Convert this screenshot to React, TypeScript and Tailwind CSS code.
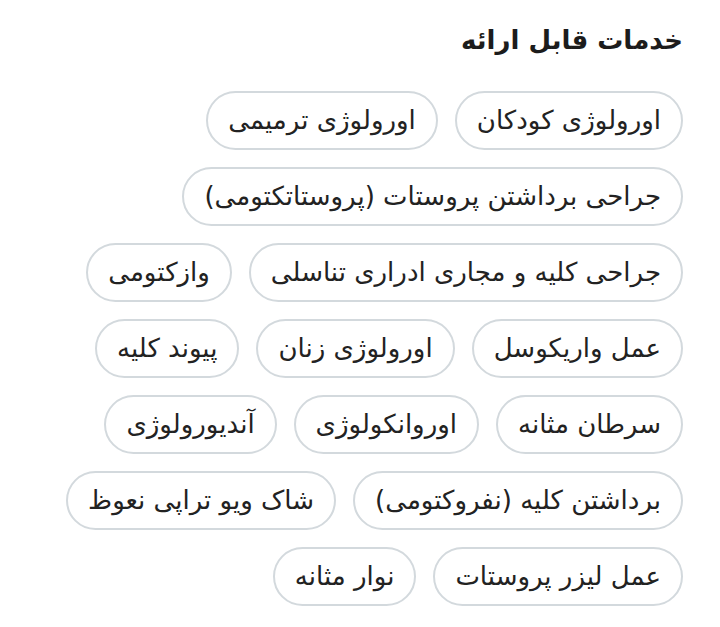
import React from "react";

const items = [
  "اورولوژی کودکان",
  "اورولوژی ترمیمی",
  "جراحی برداشتن پروستات (پروستاتکتومی)",
  "جراحی کلیه و مجاری ادراری تناسلی",
  "وازکتومی",
  "عمل واریکوسل",
  "اورولوژی زنان",
  "پیوند کلیه",
  "سرطان مثانه",
  "اوروانکولوژی",
  "آندیورولوژی",
  "برداشتن کلیه (نفروکتومی)",
  "شاک ویو تراپی نعوظ",
  "عمل لیزر پروستات",
  "نوار مثانه",
];

export default function App() {
  return (
    <div
      dir="rtl"
      className="w-[720px] h-[627px] bg-white pr-[37px] pl-[30px] pt-[22px]"
      style={{ fontFamily: '"DejaVu Sans", "Noto Sans", sans-serif' }}
    >
      <h2 className="text-[26px] font-bold text-[#1c1c1c] leading-[36px] mb-[33px]">
        خدمات قابل ارائه
      </h2>
      <div className="flex flex-wrap gap-x-[17px] gap-y-[17px]">
        {items.map((t) => (
          <div
            key={t}
            className="h-[59px] flex items-center rounded-full border-2 border-[#d3d9dd] px-[20px] text-[26px] text-[#222] whitespace-nowrap"
          >
            {t}
          </div>
        ))}
      </div>
    </div>
  );
}
